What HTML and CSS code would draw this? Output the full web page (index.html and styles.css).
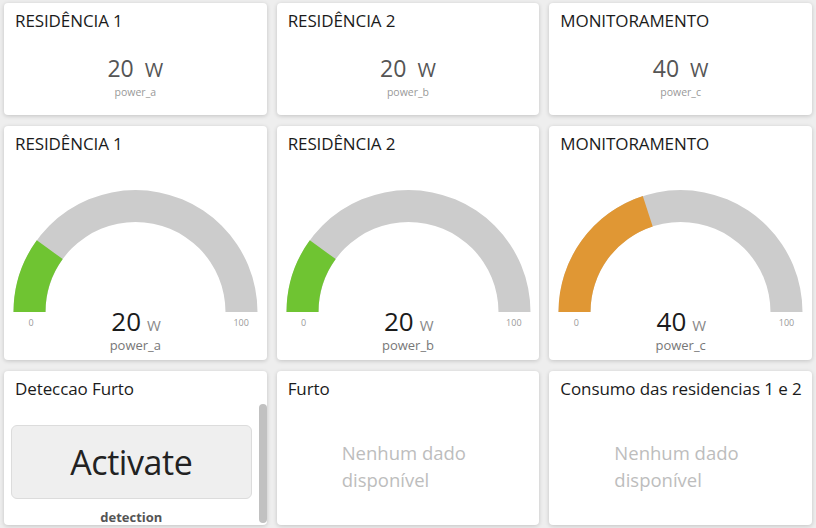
FILE: index.html
```html
<!DOCTYPE html>
<html lang="pt">
<head>
<meta charset="utf-8">
<title>Dashboard</title>
<link rel="stylesheet" href="styles.css">
</head>
<body>
<main class="grid">
  <section class="card stat">
    <h2 class="title">RESIDÊNCIA 1</h2>
    <div class="stat-value"><span class="num">20</span><span class="unit">W</span></div>
    <div class="stat-label">power_a</div>
  </section>
  <section class="card stat">
    <h2 class="title">RESIDÊNCIA 2</h2>
    <div class="stat-value"><span class="num">20</span><span class="unit">W</span></div>
    <div class="stat-label">power_b</div>
  </section>
  <section class="card stat">
    <h2 class="title">MONITORAMENTO</h2>
    <div class="stat-value"><span class="num">40</span><span class="unit">W</span></div>
    <div class="stat-label">power_c</div>
  </section>

  <section class="card gauge">
    <h2 class="title">RESIDÊNCIA 1</h2>
    <svg class="arc" viewBox="0 0 263 126" width="263" height="126">
      <path class="track" d="M 9.5 124 A 122 122 0 0 1 253.5 124 L 221.5 124 A 90 90 0 0 0 41.5 124 Z"/>
      <path class="fill-green" d="M 9.5 124 A 122 122 0 0 1 32.8 52.29 L 58.69 71.1 A 90 90 0 0 0 41.5 124 Z"/>
    </svg>
    <div class="gauge-row">
      <span class="lim">0</span>
      <span class="gval"><span class="gnum">20</span><span class="gunit">W</span></span>
      <span class="lim">100</span>
    </div>
    <div class="gauge-label">power_a</div>
  </section>
  <section class="card gauge">
    <h2 class="title">RESIDÊNCIA 2</h2>
    <svg class="arc" viewBox="0 0 263 126" width="263" height="126">
      <path class="track" d="M 9.5 124 A 122 122 0 0 1 253.5 124 L 221.5 124 A 90 90 0 0 0 41.5 124 Z"/>
      <path class="fill-green" d="M 9.5 124 A 122 122 0 0 1 32.8 52.29 L 58.69 71.1 A 90 90 0 0 0 41.5 124 Z"/>
    </svg>
    <div class="gauge-row">
      <span class="lim">0</span>
      <span class="gval"><span class="gnum">20</span><span class="gunit">W</span></span>
      <span class="lim">100</span>
    </div>
    <div class="gauge-label">power_b</div>
  </section>
  <section class="card gauge">
    <h2 class="title">MONITORAMENTO</h2>
    <svg class="arc" viewBox="0 0 263 126" width="263" height="126">
      <path class="track" d="M 9.5 124 A 122 122 0 0 1 253.5 124 L 221.5 124 A 90 90 0 0 0 41.5 124 Z"/>
      <path class="fill-orange" d="M 9.5 124 A 122 122 0 0 1 93.8 7.97 L 103.69 38.4 A 90 90 0 0 0 41.5 124 Z"/>
    </svg>
    <div class="gauge-row">
      <span class="lim">0</span>
      <span class="gval"><span class="gnum">40</span><span class="gunit">W</span></span>
      <span class="lim">100</span>
    </div>
    <div class="gauge-label">power_c</div>
  </section>

  <section class="card control">
    <h2 class="title">Deteccao Furto</h2>
    <div class="control-body">
      <div class="control-content">
        <button class="activate" type="button">Activate</button>
        <div class="control-label">detection</div>
      </div>
      <div class="scrollbar"><div class="thumb"></div></div>
    </div>
  </section>
  <section class="card empty">
    <h2 class="title">Furto</h2>
    <p class="nodata">Nenhum dado<br>disponível</p>
  </section>
  <section class="card empty">
    <h2 class="title">Consumo das residencias 1 e 2</h2>
    <p class="nodata">Nenhum dado<br>disponível</p>
  </section>
</main>
</body>
</html>
```
FILE: styles.css
```css
* { box-sizing: border-box; }
html, body { margin: 0; padding: 0; }
body {
  background: #eeeeee;
  font-family: "Open Sans", "Noto Sans", sans-serif;
  width: 816px;
  height: 528px;
  overflow: hidden;
}
.grid {
  display: grid;
  grid-template-columns: repeat(3, 1fr);
  grid-template-rows: 112px 234px 154px;
  column-gap: 10px;
  row-gap: 11px;
  padding: 3px 4px 0 4px;
}
.card {
  background: #fff;
  border-radius: 4px;
  box-shadow: 0 1px 4px rgba(0,0,0,0.18);
  overflow: hidden;
  position: relative;
}
.title {
  margin: 0;
  padding: 7px 11px 0;
  font-size: 17px;
  font-weight: 400;
  line-height: 22px;
  color: #1b1b1b;
  letter-spacing: -0.1px;
  white-space: nowrap;
}

/* stat cards */
.stat-value {
  display: flex;
  justify-content: center;
  align-items: baseline;
  gap: 11px;
  margin-top: 22px;
  color: #555;
  line-height: 28px;
}
.num { font-size: 23px; }
.unit { font-size: 20px; }
.stat-label {
  text-align: center;
  font-size: 10.5px;
  color: #999;
  line-height: 14px;
  margin-top: 1px;
}

/* gauges */
.arc {
  display: block;
  margin-top: 33px;
}
.track { fill: #cccccc; }
.fill-green { fill: #6fc432; }
.fill-orange { fill: #e09734; }
.gauge-row {
  display: grid;
  grid-template-columns: 32px 1fr 32px;
  align-items: center;
  padding: 0 9.5px 0 11px;
  margin-top: -6px;
  height: 26px;
}
.lim {
  text-align: center;
  font-size: 9px;
  color: #999;
}
.gval {
  text-align: center;
  color: #1b1b1b;
}
.gnum { font-size: 26px; line-height: 26px; }
.gunit { font-size: 15px; color: #888; margin-left: 6px; }
.gauge-label {
  text-align: center;
  font-size: 13px;
  color: #777;
  line-height: 16px;
  margin-top: 3px;
}

/* control */
.control-body {
  display: flex;
  margin-top: 4px;
}
.control-content {
  flex: 1;
  padding: 21px 7px 0;
}
.activate {
  display: block;
  width: 100%;
  height: 74px;
  background: #efefef;
  border: 1px solid #dcdcdc;
  border-radius: 6px;
  font-family: "Open Sans", "Noto Sans", sans-serif;
  font-size: 34px;
  color: #222;
  letter-spacing: -0.4px;
}
.control-label {
  text-align: center;
  font-weight: 700;
  font-size: 13px;
  color: #555;
  margin-top: 9px;
}
.scrollbar {
  width: 8px;
}
.thumb {
  width: 8px;
  height: 119px;
  background: #c1c1c1;
  border-radius: 4px;
}

/* empty */
.nodata {
  margin: 39px 0 0 65px;
  font-size: 18.5px;
  line-height: 27px;
  color: #bdbdbd;
}
```
